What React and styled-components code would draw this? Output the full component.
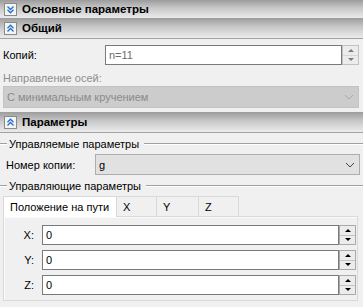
import React from "react";
import styled, { createGlobalStyle } from "styled-components";

const GlobalStyle = createGlobalStyle`
  html, body {
    margin: 0;
    padding: 0;
    background: #f0f0f0;
  }
  body {
    font-family: "Liberation Sans", Arial, sans-serif;
    font-size: 11px;
    color: #000;
  }
`;

export const Page = styled.div`
  width: 363px;
  height: 307px;
  overflow: hidden;
  background: #f0f0f0;
`;

export const SectionHeader = styled.div`
  height: ${(p) => p.$h}px;
  display: flex;
  align-items: center;
  gap: 5px;
  padding-left: 4px;
  background: linear-gradient(#9c9c9c, #c8c8c8 45%, #ebebeb);
  font-weight: bold;
  font-size: 11.5px;
  white-space: nowrap;
  border-bottom: ${(p) => (p.$line ? "1px solid #a3a3a3" : "none")};
`;

export const ToggleBox = styled.span`
  width: 11px;
  height: 11px;
  border: 1px solid #8a8a8a;
  background: #f4f4f4;
  display: flex;
  align-items: center;
  justify-content: center;
`;

export const SectionBody = styled.div`
  padding: ${(p) => p.$pad};
`;

export const FieldRow = styled.div`
  display: flex;
  align-items: center;
  height: ${(p) => p.$h || 20}px;
  margin-top: ${(p) => p.$mt || 0}px;
  margin-right: ${(p) => p.$mr || 0}px;
`;

export const Label = styled.span`
  width: ${(p) => p.$w || "auto"};
  flex-shrink: 0;
  white-space: nowrap;
  color: ${(p) => (p.$disabled ? "#8d8d8d" : "#000")};
  text-align: ${(p) => p.$align || "left"};
  padding-left: ${(p) => p.$indent || 0}px;
  box-sizing: border-box;
`;

export const SpinWrap = styled.div`
  flex: 1;
  display: flex;
  height: 20px;
`;

export const SpinInput = styled.div`
  flex: 1;
  border: 1px solid #7a7a7a;
  background: #fff;
  display: flex;
  align-items: center;
  padding-left: 3px;
  color: ${(p) => (p.$muted ? "#6e6e6e" : "#000")};
`;

export const SpinButtons = styled.div`
  width: 15px;
  border: 1px solid ${(p) => (p.$muted ? "#c2c2c2" : "#a9a9a9")};
  background: #ececec;
  display: flex;
  flex-direction: column;
`;

export const SpinHalf = styled.div`
  flex: 1;
  display: flex;
  align-items: center;
  justify-content: center;
  border-top: ${(p) => (p.$second ? `1px solid ${p.$muted ? "#d6d6d6" : "#c4c4c4"}` : "none")};
  &::after {
    content: "";
    border-left: 3px solid transparent;
    border-right: 3px solid transparent;
    ${(p) =>
      p.$second
        ? `border-top: 3px solid ${p.$muted ? "#7c7c7c" : "#000"};`
        : `border-bottom: 3px solid ${p.$muted ? "#7c7c7c" : "#000"};`}
  }
`;

export const Combo = styled.div`
  height: ${(p) => p.$h || 21}px;
  flex: 1;
  box-sizing: border-box;
  border: 1px solid ${(p) => (p.$disabled ? "#c3c3c3" : "#adadad")};
  background: ${(p) => (p.$disabled ? "#cccccc" : "#e1e1e1")};
  color: ${(p) => (p.$disabled ? "#8a8a8a" : "#000")};
  display: flex;
  align-items: center;
  justify-content: space-between;
  padding: 0 4px 0 3px;
`;

export const GroupTitle = styled.div`
  display: flex;
  align-items: center;
  height: 14px;
  gap: 2px;
  margin-top: ${(p) => p.$mt || 0}px;
  white-space: nowrap;
  &::before {
    content: "";
    width: 7px;
    border-top: 1px solid #a0a0a0;
    border-bottom: 1px solid #fff;
  }
  &::after {
    content: "";
    flex: 1;
    border-top: 1px solid #a0a0a0;
    border-bottom: 1px solid #fff;
    margin-left: 3px;
  }
`;

export const TabStrip = styled.div`
  display: flex;
  margin: 3px 0 0 3px;
  height: 20px;
`;

export const Tab = styled.div`
  width: ${(p) => p.$w}px;
  flex-shrink: 0;
  box-sizing: border-box;
  white-space: nowrap;
  border: 1px solid #d9d9d9;
  border-bottom: none;
  margin-left: ${(p) => (p.$first ? 0 : -1)}px;
  background: ${(p) => (p.$active ? "#fff" : "#f0f0f0")};
  padding-left: ${(p) => (p.$active ? 6 : 6)}px;
  display: flex;
  align-items: center;
  position: relative;
  z-index: ${(p) => (p.$active ? 1 : 0)};
  height: ${(p) => (p.$active ? 21 : 20)}px;
`;

export const TabPanel = styled.div`
  margin: 0 5px 0 3px;
  border: 1px solid #dadada;
  box-shadow: inset 1px 1px 0 #fbfbfb;
  background: #f0f0f0;
  padding: 8px 1px 0 0;
  display: flex;
  flex-direction: column;
  gap: 5px;
  height: 75px;
`;

const Chevrons = ({ down }) => (
  <svg width="9" height="9" viewBox="0 0 9 9">
    <g
      fill="none"
      stroke="#1f6fd0"
      strokeWidth="1.3"
      transform={down ? "" : "rotate(180 4.5 4.5)"}
    >
      <polyline points="1.5,1.5 4.5,4.5 7.5,1.5" />
      <polyline points="1.5,4.8 4.5,7.8 7.5,4.8" />
    </g>
  </svg>
);

const ChevronDown = ({ color }) => (
  <svg width="10" height="6" viewBox="0 0 10 6">
    <polyline points="1,1 5,5 9,1" fill="none" stroke={color} strokeWidth="1" />
  </svg>
);

const Spin = ({ value, muted }) => (
  <SpinWrap>
    <SpinInput $muted={muted}>{value}</SpinInput>
    <SpinButtons $muted={muted}>
      <SpinHalf $muted={muted} />
      <SpinHalf $muted={muted} $second />
    </SpinButtons>
  </SpinWrap>
);

const Header = ({ title, down, h, line }) => (
  <SectionHeader $h={h} $line={line}>
    <ToggleBox>
      <Chevrons down={down} />
    </ToggleBox>
    {title}
  </SectionHeader>
);

const axes = ["X", "Y", "Z"];

export default function App() {
  return (
    <Page>
      <GlobalStyle />
      <Header title="Основные параметры" h={18} down />
      <Header title="Общий" h={20} line />
      <SectionBody $pad="6px 4px 4px 3px">
        <FieldRow>
          <Label $w="102px">Копий:</Label>
          <Spin value="n=11" muted />
        </FieldRow>
        <FieldRow $h={14} $mt={6}>
          <Label $disabled>Направление осей:</Label>
        </FieldRow>
        <FieldRow $h={22} $mt={1}>
          <Combo $disabled $h={22}>
            С минимальным кручением
            <ChevronDown color="#a8a8a8" />
          </Combo>
        </FieldRow>
      </SectionBody>
      <Header title="Параметры" h={20} line />
      <SectionBody $pad="4px 0 0 0">
        <GroupTitle>Управляемые параметры</GroupTitle>
        <FieldRow $h={21} $mt={3} $mr={3}>
          <Label $w="95px" $indent={6}>Номер копии:</Label>
          <Combo>
            g
            <ChevronDown color="#444" />
          </Combo>
        </FieldRow>
        <GroupTitle $mt={4}>Управляющие параметры</GroupTitle>
        <TabStrip>
          <Tab $w={114} $active $first>Положение на пути</Tab>
          <Tab $w={41}>X</Tab>
          <Tab $w={43}>Y</Tab>
          <Tab $w={41}>Z</Tab>
        </TabStrip>
        <TabPanel>
          {axes.map((a) => (
            <FieldRow key={a}>
              <Label $w="30px" $align="right">{a}:</Label>
              <span style={{ width: 8 }} />
              <Spin value="0" />
            </FieldRow>
          ))}
        </TabPanel>
      </SectionBody>
    </Page>
  );
}
